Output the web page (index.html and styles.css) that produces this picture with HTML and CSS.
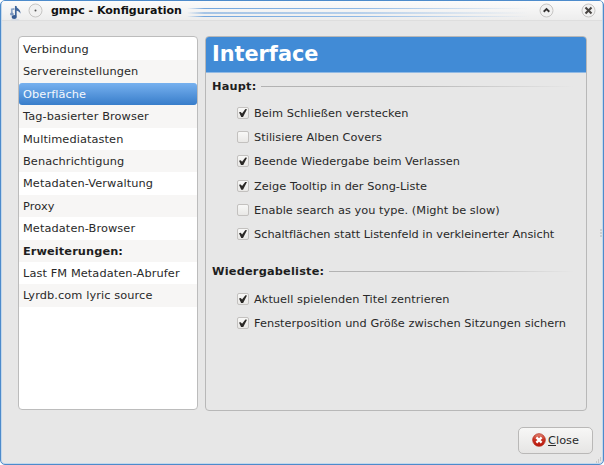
FILE: index.html
```html
<!DOCTYPE html>
<html lang="de">
<head>
<meta charset="utf-8">
<title>gmpc - Konfiguration</title>
<link rel="stylesheet" href="styles.css">
</head>
<body>
<div class="window">
  <header class="titlebar">
    <svg class="app-icon" width="12" height="16" viewBox="0 0 12 16"><path d="M5.800 1v10.500" stroke="#3f659b" stroke-width="1.700"/><path d="M5.200 .5c1 2.500 5.800 3.500 5.300 8.300C9.800 6.800 8 5.700 5.200 5.500z" fill="#3f659b"/><ellipse cx="4.200" cy="12" rx="2.600" ry="2.100" fill="#365b93"/><path d="M1.800 3.500v5.500M1.500 4.300l3-.5" stroke="#8aa4c8" stroke-width="1.800"/><ellipse cx="1.900" cy="9" rx="1.900" ry="1.500" fill="#7894bd"/><ellipse cx="5" cy="14.700" rx="4.500" ry=".8" fill="#d3dae4"/></svg>
    <svg class="menu-button" width="15" height="15" viewBox="0 0 15 15"><circle cx="7.500" cy="7.500" r="6.500" fill="#f1f1f1" stroke="#c5c4c3"/><circle cx="7.500" cy="7.500" r="1" fill="#555"/></svg>
    <h1 class="title">gmpc - Konfiguration</h1>
    <div class="stripes"><i></i><i></i><i></i></div>
    <svg class="shade" width="15" height="15" viewBox="0 0 15 15"><circle cx="7.500" cy="7.500" r="6.500" fill="#f1f1f1" stroke="#c5c4c3"/><path d="M4.700 8.700l2.800-2.600 2.800 2.600" fill="none" stroke="#353332" stroke-width="1.900"/></svg>
    <svg class="close-icon" width="15" height="15" viewBox="0 0 15 15"><circle cx="7.500" cy="7.500" r="6.500" fill="#f1f1f1" stroke="#c5c4c3"/><path d="M4.500 4.600l6 6m0-6l-6 6" stroke="#484542" stroke-width="2.100"/></svg>
  </header>
  <main class="content">
    <ul class="categories">
      <li>Verbindung</li>
      <li>Servereinstellungen</li>
      <li class="selected">Oberfläche</li>
      <li>Tag-basierter Browser</li>
      <li>Multimediatasten</li>
      <li>Benachrichtigung</li>
      <li>Metadaten-Verwaltung</li>
      <li>Proxy</li>
      <li>Metadaten-Browser</li>
      <li class="heading">Erweiterungen:</li>
      <li>Last FM Metadaten-Abrufer</li>
      <li>Lyrdb.com lyric source</li>
    </ul>
    <section class="panel">
      <h2 class="banner">Interface</h2>
      <h3 class="group"><span>Haupt:</span></h3>
      <div class="options">
        <label><span class="box on"></span><span>Beim Schließen verstecken</span></label>
        <label><span class="box"></span><span>Stilisiere Alben Covers</span></label>
        <label><span class="box on"></span><span>Beende Wiedergabe beim Verlassen</span></label>
        <label><span class="box on"></span><span>Zeige Tooltip in der Song-Liste</span></label>
        <label><span class="box"></span><span>Enable search as you type. (Might be slow)</span></label>
        <label class="tight"><span class="box on"></span><span>Schaltflächen statt Listenfeld in verkleinerter Ansicht</span></label>
      </div>
      <h3 class="group second"><span>Wiedergabeliste:</span></h3>
      <div class="options">
        <label><span class="box on"></span><span>Aktuell spielenden Titel zentrieren</span></label>
        <label><span class="box on"></span><span>Fensterposition und Größe zwischen Sitzungen sichern</span></label>
      </div>
    </section>
  </main>
  <footer class="actions">
    <button class="close-button">
      <svg width="14" height="14" viewBox="0 0 14 14"><defs><linearGradient id="red" x2="0" y2="1"><stop stop-color="#e48b78"/><stop offset=".45" stop-color="#c83525"/><stop offset="1" stop-color="#b81206"/></linearGradient></defs><circle cx="7" cy="7" r="6.300" fill="url(#red)" stroke="#b72a1c" stroke-width=".8"/><path d="M4.400 4.400l5.200 5.200m0-5.200L4.400 9.600" stroke="#fff" stroke-width="2.300"/></svg>
      <span><u>C</u>lose</span>
    </button>
  </footer>
  <svg class="side-grip" width="3" height="8" viewBox="0 0 3 8"><path d="M0 1h2M0 4h2M0 7h2" stroke="#b5b5b5"/></svg>
  <svg class="corner-grip" width="6" height="6" viewBox="0 0 6 6"><path d="M4 1h1M2 3h1M4 3h1M0 5h1M2 5h1" stroke="#aaa"/></svg>
</div>
</body>
</html>
```
FILE: styles.css
```css
* { box-sizing: border-box; }
body {
  margin: 0;
  background: #fff;
  font-family: "DejaVu Sans", sans-serif;
  font-size: 11.33px;
  color: #292929;
}
.window {
  position: relative;
  width: 604px;
  height: 465px;
  border: 1px solid #4d8bcb;
  border-radius: 5px;
  background: #e7e7e7;
  box-shadow: inset 0 0 0 1px #c3d8ec;
  overflow: hidden;
}
.titlebar {
  display: flex;
  align-items: center;
  height: 20px;
  margin: 0 1px;
  padding-left: 8px;
  background: linear-gradient(#fbfbfb, #ededed);
  border-bottom: 1px solid #dedede;
}
.app-icon { margin-top: 4px; }
.menu-button { margin-left: 6px; }
.title {
  margin: 0 0 0 8px;
  width: 132px;
  white-space: nowrap;
  font-size: 11px;
  line-height: 20px;
  color: #111;
}
.stripes {
  display: flex;
  flex-direction: column;
  gap: 2px;
  margin: 3px 0 0 4px;
  width: 342px;
}
.stripes i {
  height: 1px;
  background: linear-gradient(90deg, transparent, #72a6de 5%, #8db8e6 50%, transparent);
}
.stripes i:nth-child(1) { margin-bottom: 1px; }
.stripes i:nth-child(2) { height: 2px; opacity: .6; margin-bottom: -1px; }
.stripes i:nth-child(3) { margin-top: 1px; }
.shade { margin-left: 10px; }
.close-icon { margin-left: 27px; }
.content {
  display: flex;
  gap: 7px;
  padding: 15px 16px 0 17px;
}
.categories {
  width: 180px;
  height: 374px;
  margin: 0;
  padding: 1px 0;
  list-style: none;
  background: #fff;
  border: 1px solid #bcbcbc;
  border-radius: 4px;
  overflow: hidden;
}
.categories li {
  height: 22.400px;
  line-height: 22px;
  padding-left: 4px;
  letter-spacing: .1px;
  white-space: nowrap;
}
.categories li:nth-child(even) { background: #f7f6f5; }
.categories .selected {
  color: #f4f8fd;
  background: linear-gradient(#77b1ef, #387dca);
  border-radius: 3px;
}
.categories .heading { font-weight: bold; color: #1e1e1e; }
.panel {
  width: 382px;
  height: 375px;
  border: 1px solid #b8b8b8;
  border-radius: 4px;
  overflow: hidden;
}
.banner {
  height: 36px;
  margin: 0;
  padding-left: 6px;
  background: #418bd6;
  border-bottom: 1px solid #91bae5;
  color: #fff;
  font-size: 20.800px;
  line-height: 35px;
}
.group {
  display: flex;
  align-items: center;
  gap: 5px;
  height: 26px;
  margin: 0 0 2px;
  padding: 0 12px 0 6px;
  font-size: 11.330px;
  letter-spacing: .2px;
  color: #1e1e1e;
}
.group::after {
  content: "";
  flex: 1;
  height: 1px;
  background: linear-gradient(90deg, #b2b2b2, #b8b8b8 50%, transparent);
}
.group.second { margin: 12px 0 3px; }
.options { display: flex; flex-direction: column; padding-left: 31px; }
.options label {
  display: flex;
  align-items: center;
  gap: 5px;
  height: 24.200px;
  letter-spacing: .04px;
  white-space: nowrap;
}
.options .tight { letter-spacing: -.02px; }
.box {
  position: relative;
  width: 12px;
  height: 12px;
  border: 1px solid #c3c1bf;
  border-radius: 2px;
  background: linear-gradient(#f8f8f7, #e9e8e6);
}
.box.on::after {
  content: "";
  position: absolute;
  left: 1px;
  top: 1px;
  width: 8px;
  height: 8px;
  background: #2b2927;
  clip-path: polygon(0 40%, 22% 35%, 38% 55%, 80% 0, 100% 3%, 50% 100%, 28% 100%);
}
.actions {
  display: flex;
  justify-content: flex-end;
  padding: 16px 10px 0 0;
}
.close-button {
  display: flex;
  align-items: center;
  justify-content: center;
  gap: 2px;
  width: 75px;
  height: 27px;
  padding: 0 0 1px;
  border: 1px solid #b9b8b7;
  border-radius: 5px;
  background: linear-gradient(#f7f7f6, #e6e5e4);
  font: inherit;
  color: #292929;
}
.side-grip { position: absolute; right: 0; top: 228px; }
.corner-grip { position: absolute; right: 1px; bottom: 1px; }
```
